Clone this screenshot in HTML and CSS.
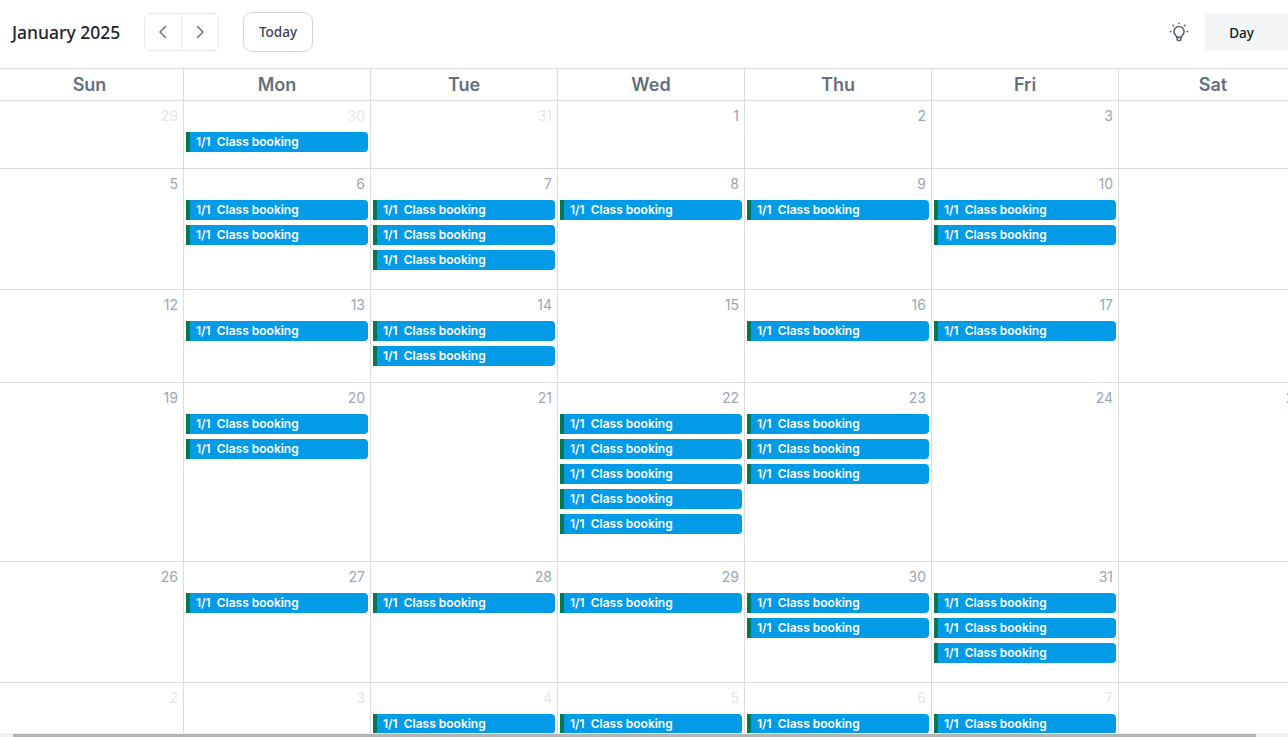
FILE: index.html
```html
<!DOCTYPE html>
<html lang="en">
<head>
<meta charset="utf-8">
<title>Calendar</title>
<link rel="stylesheet" href="styles.css">
</head>
<body>
<div class="page">
  <header class="toolbar">
    <div class="toolbar-left">
      <h1 class="title">January 2025</h1>
      <div class="nav-group">
        <button class="nav-btn"><svg width="20" height="20" viewBox="0 0 20 20" fill="none" stroke="currentColor" stroke-width="1.5" stroke-linecap="round" stroke-linejoin="round"><path d="M12.5 4.5 7 10l5.5 5.5"/></svg></button>
        <button class="nav-btn"><svg width="20" height="20" viewBox="0 0 20 20" fill="none" stroke="currentColor" stroke-width="1.5" stroke-linecap="round" stroke-linejoin="round"><path d="M7.5 4.5 13 10l-5.5 5.5"/></svg></button>
      </div>
      <button class="today-btn">Today</button>
    </div>
    <div class="toolbar-right">
      <svg class="bulb" width="20" height="20" viewBox="0 0 20 20" fill="none" stroke="currentColor" stroke-width="1.6" stroke-linecap="round" stroke-linejoin="round"><path d="M7.8 15.4c0-1.9-2.9-2.6-2.9-5.8a5.1 5.1 0 0 1 10.2 0c0 3.2-2.9 3.9-2.9 5.8z"/><path d="M8.2 15.4v2.2c0 .5.4.9.9.9h1.8c.5 0 .9-.4.9-.9v-2.2"/><path d="M10 1.2v.3M4.1 3.4l.3.3M15.9 3.4l-.3.3M1.6 9.6h.3M18.1 9.6h.3"/></svg>
      <button class="view-btn">Day</button>
    </div>
  </header>
  <div class="cal-clip">
    <div class="calendar">
      <div class="head-row">
        <div class="head-cell">Sun</div><div class="head-cell">Mon</div><div class="head-cell">Tue</div><div class="head-cell">Wed</div><div class="head-cell">Thu</div><div class="head-cell">Fri</div><div class="head-cell">Sat</div>
      </div>

      <div class="week h68">
        <div class="day muted"><span class="num">29</span></div>
        <div class="day muted"><span class="num">30</span><div class="ev"><b>1/1</b><b>Class booking</b></div></div>
        <div class="day muted"><span class="num">31</span></div>
        <div class="day"><span class="num">1</span></div>
        <div class="day"><span class="num">2</span></div>
        <div class="day"><span class="num">3</span></div>
        <div class="day"><span class="num">4</span></div>
      </div>

      <div class="week h121">
        <div class="day"><span class="num">5</span></div>
        <div class="day"><span class="num">6</span><div class="ev"><b>1/1</b><b>Class booking</b></div><div class="ev"><b>1/1</b><b>Class booking</b></div></div>
        <div class="day"><span class="num">7</span><div class="ev"><b>1/1</b><b>Class booking</b></div><div class="ev"><b>1/1</b><b>Class booking</b></div><div class="ev"><b>1/1</b><b>Class booking</b></div></div>
        <div class="day"><span class="num">8</span><div class="ev"><b>1/1</b><b>Class booking</b></div></div>
        <div class="day"><span class="num">9</span><div class="ev"><b>1/1</b><b>Class booking</b></div></div>
        <div class="day"><span class="num">10</span><div class="ev"><b>1/1</b><b>Class booking</b></div><div class="ev"><b>1/1</b><b>Class booking</b></div></div>
        <div class="day"><span class="num">11</span></div>
      </div>

      <div class="week h93">
        <div class="day"><span class="num">12</span></div>
        <div class="day"><span class="num">13</span><div class="ev"><b>1/1</b><b>Class booking</b></div></div>
        <div class="day"><span class="num">14</span><div class="ev"><b>1/1</b><b>Class booking</b></div><div class="ev"><b>1/1</b><b>Class booking</b></div></div>
        <div class="day"><span class="num">15</span></div>
        <div class="day"><span class="num">16</span><div class="ev"><b>1/1</b><b>Class booking</b></div></div>
        <div class="day"><span class="num">17</span><div class="ev"><b>1/1</b><b>Class booking</b></div></div>
        <div class="day"><span class="num">18</span></div>
      </div>

      <div class="week h179">
        <div class="day"><span class="num">19</span></div>
        <div class="day"><span class="num">20</span><div class="ev"><b>1/1</b><b>Class booking</b></div><div class="ev"><b>1/1</b><b>Class booking</b></div></div>
        <div class="day"><span class="num">21</span></div>
        <div class="day"><span class="num">22</span><div class="ev"><b>1/1</b><b>Class booking</b></div><div class="ev"><b>1/1</b><b>Class booking</b></div><div class="ev"><b>1/1</b><b>Class booking</b></div><div class="ev"><b>1/1</b><b>Class booking</b></div><div class="ev"><b>1/1</b><b>Class booking</b></div></div>
        <div class="day"><span class="num">23</span><div class="ev"><b>1/1</b><b>Class booking</b></div><div class="ev"><b>1/1</b><b>Class booking</b></div><div class="ev"><b>1/1</b><b>Class booking</b></div></div>
        <div class="day"><span class="num">24</span></div>
        <div class="day"><span class="num">25</span></div>
      </div>

      <div class="week h121">
        <div class="day"><span class="num">26</span></div>
        <div class="day"><span class="num">27</span><div class="ev"><b>1/1</b><b>Class booking</b></div></div>
        <div class="day"><span class="num">28</span><div class="ev"><b>1/1</b><b>Class booking</b></div></div>
        <div class="day"><span class="num">29</span><div class="ev"><b>1/1</b><b>Class booking</b></div></div>
        <div class="day"><span class="num">30</span><div class="ev"><b>1/1</b><b>Class booking</b></div><div class="ev"><b>1/1</b><b>Class booking</b></div></div>
        <div class="day"><span class="num">31</span><div class="ev"><b>1/1</b><b>Class booking</b></div><div class="ev"><b>1/1</b><b>Class booking</b></div><div class="ev"><b>1/1</b><b>Class booking</b></div></div>
        <div class="day muted"><span class="num">1</span></div>
      </div>

      <div class="week h121">
        <div class="day muted"><span class="num">2</span></div>
        <div class="day muted"><span class="num">3</span></div>
        <div class="day muted"><span class="num">4</span><div class="ev"><b>1/1</b><b>Class booking</b></div></div>
        <div class="day muted"><span class="num">5</span><div class="ev"><b>1/1</b><b>Class booking</b></div></div>
        <div class="day muted"><span class="num">6</span><div class="ev"><b>1/1</b><b>Class booking</b></div></div>
        <div class="day muted"><span class="num">7</span><div class="ev"><b>1/1</b><b>Class booking</b></div></div>
        <div class="day muted"><span class="num">8</span></div>
      </div>
    </div>
  </div>
  <div class="scrollbar"><div class="thumb"></div></div>
</div>
</body>
</html>
```
FILE: styles.css
```css
* { box-sizing: border-box; }
html, body { margin: 0; height: 100%; overflow: hidden; background: #fff; }
.page { height: 737px; width: 1288px; position: relative; overflow: hidden; }

.toolbar { height: 68px; display: flex; justify-content: space-between; align-items: center; padding: 0 0 4px 12px; }
.toolbar-left { display: flex; align-items: center; }
.toolbar-right { display: flex; align-items: center; gap: 16px; margin-right: -16px; }
.title { margin: 0 24px 0 0; font: 500 17.5px/24px "Noto Sans", sans-serif; color: #1d2433; width: 108px; white-space: nowrap; }
.nav-group { display: flex; height: 38px; border: 1px solid #e5e7eb; border-radius: 7px; width: 75px; margin-right: 24px; }
.nav-btn { flex: 1; padding: 0; border: 0; background: none; color: #6b7280; display: flex; align-items: center; justify-content: center; }
.nav-btn + .nav-btn { border-left: 1px solid #e5e7eb; }
.today-btn { width: 70px; height: 40px; border: 1px solid #d1d5db; border-radius: 9px; background: #fff; color: #374151; font: 500 13.5px "Noto Sans", sans-serif; padding: 0; }
.bulb { color: #5b6470; display: block; }
.view-btn { width: 99px; height: 38px; border: 0; border-radius: 4px; background: #f4f5f7; color: #111827; font: 500 13.5px "Noto Sans", sans-serif; padding: 2px 26px 0 0; }

.cal-clip { overflow: hidden; }
.calendar { width: 1313px; margin-left: -4px; border-top: 1px solid #dcdcdc; }
.head-row, .week { display: grid; grid-template-columns: 188px repeat(5, 187px) 190px; }
.head-row { grid-template-columns: 188px repeat(5, 187px) 189px; }
.head-cell { height: 32px; border-right: 1px solid #dcdcdc; border-bottom: 1px solid #dcdcdc; text-align: center; font: 600 18px/31px Inter, sans-serif; color: #64707f; }
.week { border-bottom: 1px solid #dcdcdc; }
.h68 { height: 68px; }
.h121 { height: 121px; }
.h93 { height: 93px; }
.h179 { height: 179px; }
.day { border-right: 1px solid #dcdcdc; padding: 4px 2px 0 2px; display: flex; flex-direction: column; gap: 5px; }
.num { display: block; text-align: right; font: 400 14px/22px Inter, sans-serif; color: #9aa5b8; padding-right: 3px; height: 22px; }
.muted .num { color: #e5e7eb; }
.ev { height: 20px; flex: none; background: #019be8; border-radius: 0 4px 4px 0; display: flex; gap: 6px; padding-left: 10px; color: #fff; font: 600 12px/20px Inter, sans-serif; white-space: nowrap; box-shadow: inset 4px 0 0 #06784f; }
.ev b { font-weight: 600; }

.scrollbar { position: absolute; left: 0; right: 0; bottom: 0; height: 4px; background: #f1f1f1; }
.thumb { position: absolute; left: 13px; width: 1243px; top: 1px; bottom: 0; background: #b5b5b5; }
```
